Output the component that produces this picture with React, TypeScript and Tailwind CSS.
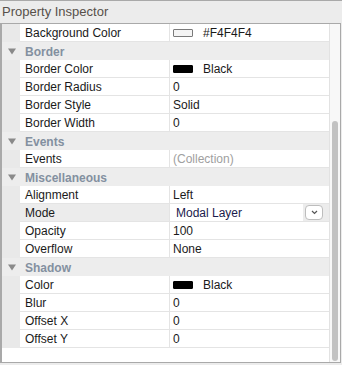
import React from "react";

type Row =
  | { kind: "header"; label: string }
  | { kind: "prop"; label: string; value?: string; swatch?: string; muted?: boolean; select?: boolean };

const rows: Row[] = [
  { kind: "prop", label: "Background Color", value: "#F4F4F4", swatch: "#f4f4f4" },
  { kind: "header", label: "Border" },
  { kind: "prop", label: "Border Color", value: "Black", swatch: "#000000" },
  { kind: "prop", label: "Border Radius", value: "0" },
  { kind: "prop", label: "Border Style", value: "Solid" },
  { kind: "prop", label: "Border Width", value: "0" },
  { kind: "header", label: "Events" },
  { kind: "prop", label: "Events", value: "(Collection)", muted: true },
  { kind: "header", label: "Miscellaneous" },
  { kind: "prop", label: "Alignment", value: "Left" },
  { kind: "prop", label: "Mode", value: "Modal Layer", select: true },
  { kind: "prop", label: "Opacity", value: "100" },
  { kind: "prop", label: "Overflow", value: "None" },
  { kind: "header", label: "Shadow" },
  { kind: "prop", label: "Color", value: "Black", swatch: "#000000" },
  { kind: "prop", label: "Blur", value: "0" },
  { kind: "prop", label: "Offset X", value: "0" },
  { kind: "prop", label: "Offset Y", value: "0" },
];

function Triangle() {
  return (
    <svg width="8" height="7" viewBox="0 0 8 7">
      <path d="M0 0.5h8L4 6.5z" fill="#8a8a8a" />
    </svg>
  );
}

function PropRow({ row }: { row: Row }) {
  if (row.kind === "header") {
    return (
      <div className="flex h-[18px] bg-[#ededed]">
        <div className="w-[18px] flex items-center justify-center pl-[2px]">
          <Triangle />
        </div>
        <div className="flex items-center pl-[5px] pt-[1px] font-bold text-[#8390a0]">{row.label}</div>
      </div>
    );
  }
  return (
    <div className="flex h-[18px]">
      <div className="w-[18px] bg-[#e9e9e9]" />
      <div
        className={`w-[150px] flex items-center pl-[5px] pt-[1px] border-b border-[#e4e4e4] border-r ${
          row.select ? "bg-[#ececec]" : "bg-white"
        }`}
      >
        {row.label}
      </div>
      {row.select ? (
        <div className="flex-1 flex items-center bg-[#ececec] border-b border-[#e4e4e4]">
          <div className="w-[133px] h-full bg-white flex items-center pl-[6px] pt-[1px] text-[#1b1b4d]">{row.value}</div>
          <div className="ml-[2px] w-[18px] h-[15px] rounded-[4px] border border-[#bdbdbd] bg-white flex items-center justify-center">
            <svg width="7" height="5" viewBox="0 0 7 5">
              <path d="M1 1l2.5 2.5L6 1" fill="none" stroke="#555" strokeWidth="1.2" />
            </svg>
          </div>
        </div>
      ) : (
        <div className="flex-1 flex items-center pl-[3px] pt-[1px] bg-white border-b border-[#e4e4e4]">
          {row.swatch && (
            <span
              className="w-[20px] h-[8px] mr-[10px] rounded-[1px]"
              style={{
                background: row.swatch,
                border: row.swatch === "#000000" ? "1px solid #000" : "1px solid #7a7a7a",
              }}
            />
          )}
          <span className={row.muted ? "text-[#a0a0a0]" : ""}>{row.value}</span>
        </div>
      )}
    </div>
  );
}

export default function App() {
  return (
    <div
      className="w-[342px] h-[365px] bg-[#ececec] border-t border-[#a9a9a9] text-[12px] text-[#1a1a1a] flex flex-col"
      style={{ fontFamily: '"Liberation Sans", Arial, sans-serif' }}
    >
      <div className="h-[22px] flex items-center pl-[2px] text-[13px] text-[#57504a]">Property Inspector</div>
      <div className="w-[341px] h-[340px] flex border-t border-b border-r border-l-2 border-[#a9a9a9] bg-white">
        <div className="flex-1 flex flex-col">
          {rows.map((r, i) => (
            <PropRow key={i} row={r} />
          ))}
        </div>
        <div className="w-[11px] bg-[#f8f8f8] border-l border-[#e2e2e2] pt-[97px] pb-[1px] flex justify-center">
          <div className="w-[6px] h-full rounded-full bg-[#c2c2c2]" />
        </div>
      </div>
    </div>
  );
}
